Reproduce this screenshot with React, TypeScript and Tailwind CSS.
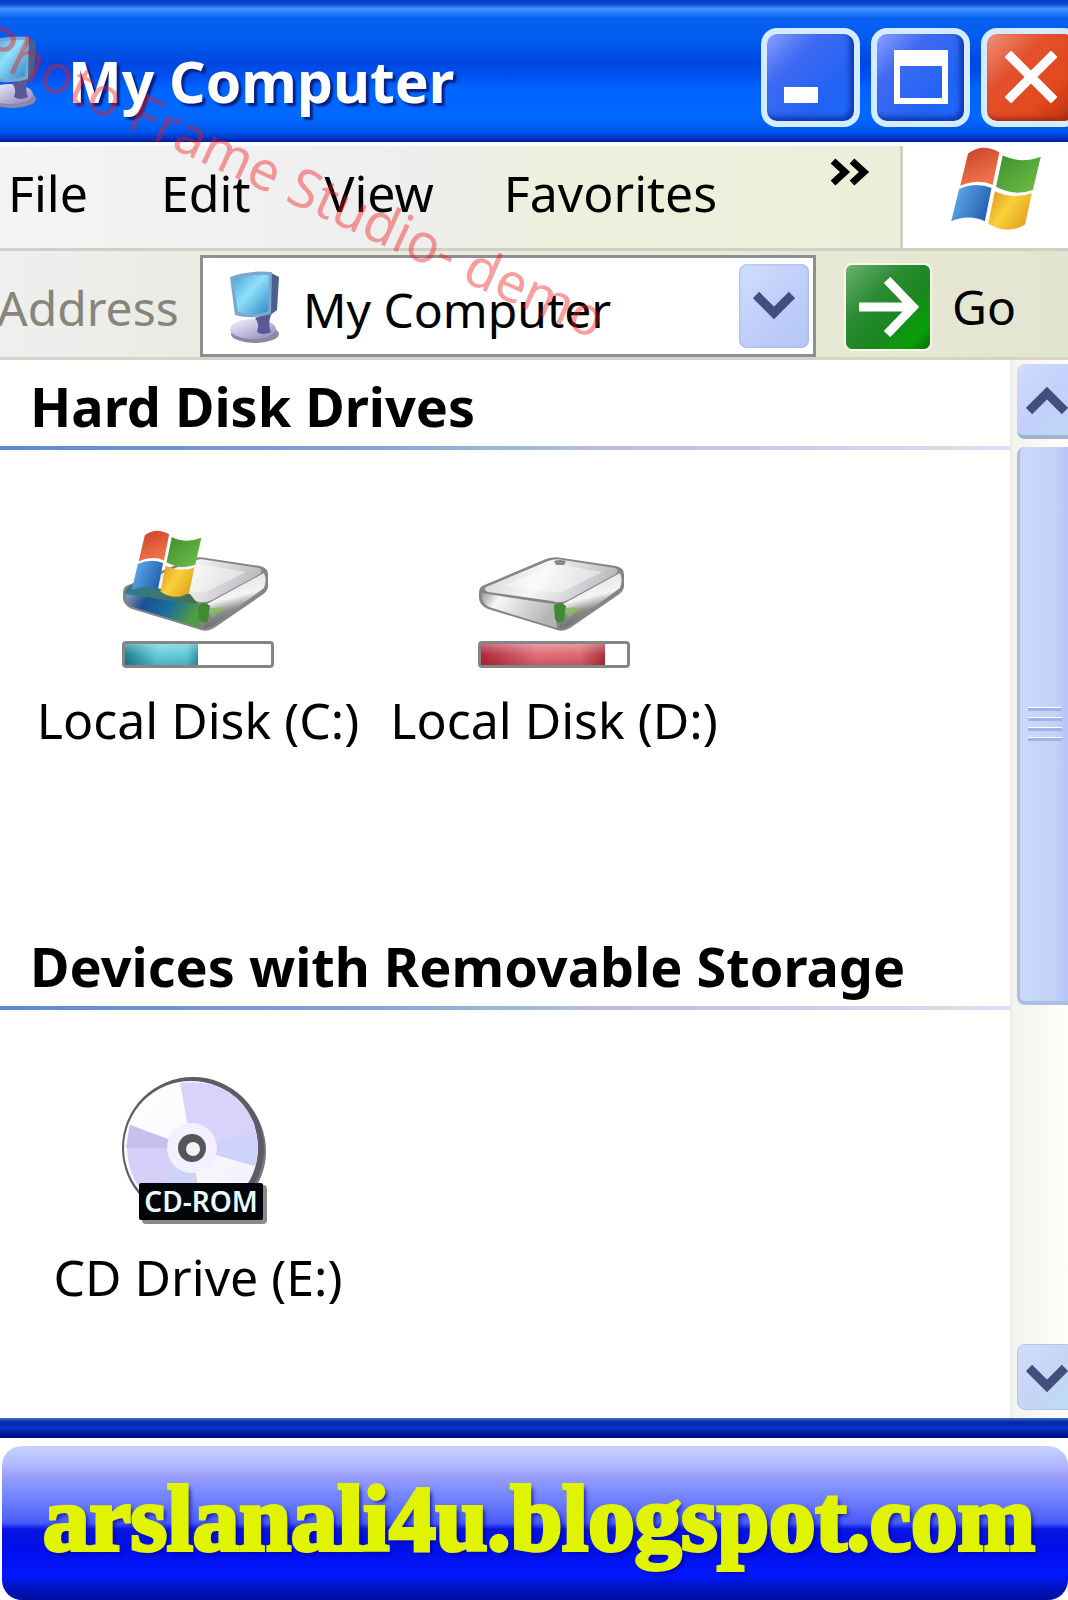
import React from "react";

function ComputerIcon({ className }: { className: string }) {
  return (
    <svg viewBox="0 0 56 76" className={className} aria-hidden="true">
      <defs>
        <linearGradient id="screen" x1="0" y1="0" x2="1" y2="1">
          <stop offset="0" stopColor="#4f9fd6" />
          <stop offset="0.45" stopColor="#8fe0fb" />
          <stop offset="1" stopColor="#2f86c8" />
        </linearGradient>
        <linearGradient id="base" x1="0" y1="0" x2="1" y2="1">
          <stop offset="0" stopColor="#f6f3ff" />
          <stop offset="1" stopColor="#8d86b8" />
        </linearGradient>
      </defs>
      <ellipse cx="28" cy="66" rx="24" ry="9" fill="#8b89a8" />
      <ellipse cx="26" cy="61" rx="23" ry="10" fill="url(#base)" />
      <path d="M28 50 L45 44 Q40 56 44 64 Q36 68 30 64 Q33 56 28 50 Z" fill="#5c5796" />
      <path d="M44 5 L52 9 L50 42 L34 54 L42 46 Z" fill="#4a5f8c" />
      <path d="M3 9 Q22 2 45 4 L44 46 Q26 52 8 47 Z" fill="#7aa6cf" />
      <path d="M6 12 Q22 6 42 7 L41 43 Q26 49 11 44 Z" fill="url(#screen)" />
    </svg>
  );
}

function FlagShapes() {
  return (
    <>
      <path d="M17 6 Q30 -4 45 5 L39 35 Q26 29 10 36 Z" fill="url(#flagRed)" />
      <path d="M48 8 Q64 16 82 9 L75 40 Q58 46 42 37 Z" fill="url(#flagGreen)" />
      <path d="M9 39 Q24 32 38 38 L32 69 Q18 62 2 69 Z" fill="url(#flagBlue)" />
      <path d="M41 41 Q57 49 74 43 L68 72 Q52 82 35 71 Z" fill="url(#flagYellow)" />
    </>
  );
}

function FlagGradients() {
  return (
    <defs>
      <linearGradient id="flagRed" x1="0" y1="0" x2="0.4" y2="1">
        <stop offset="0" stopColor="#c9402c" />
        <stop offset="1" stopColor="#f0754a" />
      </linearGradient>
      <linearGradient id="flagGreen" x1="0" y1="0" x2="1" y2="1">
        <stop offset="0" stopColor="#3f8f2c" />
        <stop offset="1" stopColor="#6fc04a" />
      </linearGradient>
      <linearGradient id="flagBlue" x1="0" y1="0" x2="1" y2="0.4">
        <stop offset="0" stopColor="#67b4f2" />
        <stop offset="1" stopColor="#2763b4" />
      </linearGradient>
      <linearGradient id="flagYellow" x1="0" y1="0" x2="1" y2="0.6">
        <stop offset="0" stopColor="#d99224" />
        <stop offset="0.5" stopColor="#fbd038" />
        <stop offset="1" stopColor="#e2a51e" />
      </linearGradient>
    </defs>
  );
}

function WindowsFlag({ className }: { className: string }) {
  return (
    <svg viewBox="0 0 84 78" preserveAspectRatio="none" className={className} aria-hidden="true">
      <FlagGradients />
      <FlagShapes />
    </svg>
  );
}

function DriveIcon({ system }: { system?: boolean }) {
  return (
    <svg viewBox="0 0 152 104" className="h-[104px] w-[152px]" aria-hidden="true">
      <defs>
        <linearGradient id="driveTop" x1="0" y1="0.4" x2="1" y2="0.6">
          <stop offset="0" stopColor="#d8d8d8" />
          <stop offset="0.4" stopColor="#f6f6f6" />
          <stop offset="1" stopColor="#b4b2b8" />
        </linearGradient>
        <linearGradient id="driveFront" x1="0" y1="0" x2="1" y2="0.3">
          <stop offset="0" stopColor="#9a9a9a" />
          <stop offset="0.25" stopColor="#f7f7f7" />
          <stop offset="1" stopColor="#b5b5b5" />
        </linearGradient>
        <linearGradient id="driveSide" x1="0.3" y1="0" x2="0.6" y2="1">
          <stop offset="0" stopColor="#dedede" />
          <stop offset="0.45" stopColor="#f4f4f4" />
          <stop offset="0.65" stopColor="#8b8b8b" />
          <stop offset="1" stopColor="#5f5f5f" />
        </linearGradient>
        <linearGradient id="driveBlue" x1="0" y1="0" x2="1" y2="0.3">
          <stop offset="0" stopColor="#8ea0bc" />
          <stop offset="0.3" stopColor="#1c4f94" />
          <stop offset="0.65" stopColor="#1b6f9c" />
          <stop offset="1" stopColor="#4f9a44" />
        </linearGradient>
        <linearGradient id="flagShade" x1="0" y1="0" x2="1" y2="0">
          <stop offset="0" stopColor="#2c7d92" />
          <stop offset="1" stopColor="#4c6f4a" />
        </linearGradient>
      </defs>
      <path d="M4 56 L68 29 Q76 26 84 28 L138 36 Q146 38 146 44 L146 56 Q146 61 140 65 L92 98 Q84 103 76 99 L10 79 Q1 75 1 68 L1 63 Q1 58 4 56 Z" fill="#858585" />
      <path d="M8 57 L70 31 Q78 28 85 30 L137 38 Q142 40 138 44 L90 70 Q82 74 74 71 L10 62 Q5 60 8 57 Z" fill="url(#driveTop)" />
      <path d="M26 56 L76 34 L124 42 L82 63 Z" fill="#ffffff" opacity="0.45" />
      <path d="M4 63 Q40 69 76 74 L79 98 Q40 86 11 77 Q3 73 4 63 Z" fill={system ? "url(#driveBlue)" : "url(#driveFront)"} />
      <path d="M85 74 L142 43 Q145 50 142 58 L92 95 Q86 99 81 98 Z" fill="url(#driveSide)" />
      <path d="M76 76 Q82 70 88 76 L86 91 Q80 95 77 89 Z" fill="#3f8a32" />
      <path d="M88 78 L104 77 L90 88 Z" fill="#86bd5f" opacity="0.8" />
      {!system && <path d="M76 31 Q82 29 88 31 L86 35 L78 35 Z" fill="#888" />}
      {system && (
        <>
          <FlagGradients />
          <path d="M3 64 Q4 56 12 54 L68 64 L76 74 Q40 70 3 64 Z" fill="url(#flagShade)" />
          <g transform="translate(8 0) scale(0.87)">
            <FlagShapes />
          </g>
        </>
      )}
    </svg>
  );
}

function CdIcon() {
  return (
    <svg viewBox="0 0 152 150" className="h-[150px] w-[152px]" aria-hidden="true">
      <defs>
        <linearGradient id="disc" x1="0" y1="0" x2="1" y2="1">
          <stop offset="0" stopColor="#ffffff" />
          <stop offset="1" stopColor="#f2f0fb" />
        </linearGradient>
      </defs>
      <circle cx="74" cy="76" r="70" fill="#77767c" />
      <circle cx="71" cy="73" r="71" fill="#5d5c66" />
      <circle cx="69" cy="73" r="67" fill="url(#disc)" />
      <path d="M70 73 L58 8 Q112 2 132 48 Q138 70 133 91 Z" fill="#d9d3fb" />
      <path d="M70 73 L134 57 Q138 74 133 91 Z" fill="#cdd2fb" />
      <path d="M70 73 L8 50 Q0 80 14 108 L30 124 Z" fill="#d5cffa" />
      <path d="M70 73 L8 50 L4 73 Z" fill="#c6bff0" />
      <path d="M70 73 L28 124 L80 138 Z" fill="#cdd2f8" />
      <circle cx="70" cy="73" r="25" fill="#f4f0ff" />
      <circle cx="70" cy="73" r="14" fill="#56555c" />
      <circle cx="71" cy="74" r="7" fill="#f3f3f3" />
      <rect x="20" y="110" width="125" height="39" rx="4" fill="#8a8a8a" />
      <rect x="17" y="108" width="124" height="37" rx="2" fill="#020409" />
      <text x="79" y="137" textAnchor="middle" fill="#eafcff" fontSize="28" fontWeight="600" fontFamily="'Noto Sans', sans-serif">
        CD-ROM
      </text>
    </svg>
  );
}

function Chevron({ up, className }: { up?: boolean; className: string }) {
  return (
    <svg viewBox="0 0 42 30" className={className} fill="none" stroke="#414f80" strokeWidth="9" aria-hidden="true">
      <path d={up ? "M3 26 L21 8 L39 26" : "M3 4 L21 22 L39 4"} />
    </svg>
  );
}

function WindowButton({ label, danger, children }: { label: string; danger?: boolean; children: React.ReactNode }) {
  return (
    <button
      aria-label={label}
      className={
        "flex h-[99px] w-[99px] shrink-0 items-center justify-center rounded-2xl border-[6px] border-[#d3ecff] " +
        (danger
          ? "bg-[linear-gradient(135deg,#f09078_0%,#e3512c_35%,#e2481c_70%,#b83010_100%)] shadow-[inset_-3px_-3px_5px_#a02c14]"
          : "bg-[linear-gradient(135deg,#8ba0ff_0%,#3f6af2_30%,#2163f4_70%,#1d6cff_100%)] shadow-[inset_-4px_-4px_5px_#1238b0]")
      }
    >
      {children}
    </button>
  );
}

function DriveItem({ label, children }: { label: string; children: React.ReactNode }) {
  return (
    <li className="flex w-[356px] flex-col items-center">
      {children}
      <span className="mt-[18px] whitespace-nowrap text-[50px] leading-[68px]">{label}</span>
    </li>
  );
}

function UsageBar({ value, fill }: { value: number; fill: string }) {
  return (
    <div
      role="progressbar"
      aria-label="Used space"
      aria-valuenow={value}
      aria-valuemin={0}
      aria-valuemax={100}
      className="mt-[7px] h-[27px] w-[152px] rounded border-[3px] border-[#858585] bg-white"
    >
      <div className={"h-full " + fill} style={{ width: `${value}%` }} />
    </div>
  );
}

function SectionHeading({ children }: { children: React.ReactNode }) {
  return (
    <div>
      <h2 className="whitespace-nowrap pb-1 pl-[30px] text-[54px] font-bold leading-[72px]">{children}</h2>
      <div className="h-1 bg-[linear-gradient(90deg,#5e8ac4_0%,#7ea4d4_35%,#b6bfe0_60%,#e0def2_100%)]" />
    </div>
  );
}

function Watermark() {
  return (
    <svg viewBox="0 0 660 370" className="pointer-events-none absolute left-0 top-0 h-[370px] w-[660px]" aria-label="Photo Frame Studio- demo">
      <path id="watermarkLine" d="M-24 57 C 160 143 380 247 660 368" fill="none" />
      <text fill="#f01818" fillOpacity="0.42" fontSize="54" fontFamily="'Noto Sans', sans-serif">
        <textPath href="#watermarkLine">Photo Frame Studio- demo</textPath>
      </text>
    </svg>
  );
}

export default function App() {
  return (
    <div className="relative flex min-h-screen flex-col overflow-hidden bg-white font-['Noto_Sans',sans-serif] text-black">
      <header className="flex h-[142px] items-center overflow-hidden bg-[linear-gradient(180deg,#0a3cc0_0%,#0c4cd4_3%,#3c94ff_6%,#2f88ff_8%,#0860f0_13%,#005cf0_28%,#0048e0_44%,#0050f0_54%,#0064ff_62%,#0068ff_84%,#0054ec_93%,#0030bc_98%,#001c90_100%)]">
        <ComputerIcon className="-ml-4 h-[78px] w-14 shrink-0" />
        <h1 className="flex-1 whitespace-nowrap pl-7 pt-5 text-[57px] font-bold leading-[76px] text-white [text-shadow:3px_3px_2px_#0a2080]">My Computer</h1>
        <div className="-mr-3 flex shrink-0 gap-[11px] pb-1 pt-4">
          <WindowButton label="Minimize">
            <span className="mr-5 mt-9 h-4 w-[34px] bg-white" />
          </WindowButton>
          <WindowButton label="Maximize">
            <span className="h-[54px] w-[54px] border-[6px] border-t-[16px] border-white" />
          </WindowButton>
          <WindowButton label="Close" danger>
            <svg viewBox="0 0 56 56" className="h-[52px] w-[52px]" stroke="#fff" strokeWidth="10" aria-hidden="true">
              <path d="M3 3 L53 53 M53 3 L3 53" />
            </svg>
          </WindowButton>
        </div>
      </header>

      <div className="flex h-[106px] border-t-4 border-[#fdfdfb] bg-[linear-gradient(90deg,#f4f4f4_0%,#eeeeee_40%,#eeefdc_52%,#edeed9_100%)]">
        <nav className="flex flex-1 items-center pb-2 text-[50px] leading-[68px]">
          <button className="ml-2">File</button>
          <button className="ml-[73px]">Edit</button>
          <button className="ml-[74px]">View</button>
          <button className="ml-[70px]">Favorites</button>
          <button aria-label="More menus" className="ml-auto mr-7 self-start pt-3">
            <svg viewBox="0 0 42 28" className="h-7 w-[42px]" fill="none" stroke="#000" strokeWidth="7" aria-hidden="true">
              <path d="M3 3 L15 14 L3 25 M22 3 L34 14 L22 25" />
            </svg>
          </button>
        </nav>
        <div className="flex w-[168px] items-center justify-center border-l-[3px] border-[#d2d2c4] bg-white pb-4 pl-5">
          <WindowsFlag className="h-[84px] w-[94px]" />
        </div>
      </div>

      <div className="flex h-[112px] items-end border-y-[3px] border-b-[#d6d4c8] border-t-[#cfcfc8] bg-[linear-gradient(90deg,#efefef_0%,#ebebe4_18%,#e9ead6_70%,#e4e5d0_100%)]">
        <label htmlFor="address" className="-ml-[3px] w-[203px] shrink-0 pb-4 text-[48px] leading-[66px] text-[#85857a]">
          Address
        </label>
        <div className="flex h-[102px] flex-1 items-center border-[3px] border-[#8c9093] bg-white pl-6 pr-1">
          <ComputerIcon className="h-[78px] w-14 shrink-0" />
          <select id="address" className="min-w-0 flex-1 appearance-none bg-transparent pl-5 pt-2 text-[48px] leading-[66px] outline-none">
            <option>My Computer</option>
          </select>
          <span className="flex h-[84px] w-[70px] shrink-0 items-center justify-center rounded-lg bg-[linear-gradient(135deg,#d0defc_0%,#c0cffa_50%,#b4c6f4_100%)] shadow-[inset_0_0_3px_#8fa4d8]">
            <Chevron className="h-[30px] w-[42px]" />
          </span>
        </div>
        <button className="flex w-[252px] shrink-0 items-center gap-[20px] pb-1.5 pl-7 text-[48px] leading-[66px]">
          <span className="flex h-[88px] w-[88px] items-center justify-center rounded-lg border-2 border-[#f6fae8] bg-[linear-gradient(135deg,#6db070_0%,#2c8c34_35%,#1c8620_60%,#08a008_85%,#06700c_100%)]">
            <svg viewBox="0 0 62 60" className="h-[60px] w-[62px]" fill="none" stroke="#fff" strokeWidth="9" aria-hidden="true">
              <path d="M2 30 L54 30 M30 3 L56 30 L30 57" />
            </svg>
          </span>
          Go
        </button>
      </div>

      <div className="flex flex-1">
        <main className="min-w-0 flex-1 pt-[10px]">
          <SectionHeading>Hard Disk Drives</SectionHeading>
          <ul className="flex h-[480px] pl-5 pt-20">
            <DriveItem label="Local Disk (C:)">
              <DriveIcon system />
              <UsageBar value={50} fill="bg-[linear-gradient(180deg,#ffffff50,#ffffff00_50%,#00304030),linear-gradient(90deg,#1f8196,#67cfdb_45%,#5fc9d6_85%,#2f95a8)]" />
            </DriveItem>
            <DriveItem label="Local Disk (D:)">
              <DriveIcon />
              <UsageBar value={85} fill="bg-[linear-gradient(180deg,#ffffff50,#ffffff00_50%,#50000030),linear-gradient(90deg,#b02a3c,#e0707a_45%,#dc6a72_80%,#b0303c)]" />
            </DriveItem>
          </ul>
          <SectionHeading>Devices with Removable Storage</SectionHeading>
          <ul className="flex pl-5 pt-[65px]">
            <DriveItem label="CD Drive (E:)">
              <CdIcon />
            </DriveItem>
          </ul>
        </main>

        <aside aria-label="Scroll" className="flex w-[58px] shrink-0 flex-col overflow-hidden border-l-[3px] border-[#eeeeec] bg-[linear-gradient(90deg,#f4f4ee,#fdfdfb)]">
          <button aria-label="Scroll up" className="ml-1 mt-1 flex h-[75px] w-[60px] items-center justify-center rounded-lg border-b-4 border-[#9fb4cc] bg-[linear-gradient(135deg,#cfdcfc,#c3d0fa_50%,#bcd8f8)]">
            <Chevron up className="h-[30px] w-[42px]" />
          </button>
          <div className="ml-1 mt-2 flex h-[558px] w-[66px] items-center rounded-lg border-b-4 border-l-[3px] border-[#a9bfe4] bg-[linear-gradient(90deg,#cbd8fb_0%,#c3d2f6_55%,#b8c4fc_75%,#b4c0fc_100%)] pl-2">
            <div className="flex w-[34px] flex-col gap-[6px]">
              <span className="h-1 border-t border-white bg-[#9cb4e8]" />
              <span className="h-1 border-t border-white bg-[#9cb4e8]" />
              <span className="h-1 border-t border-white bg-[#9cb4e8]" />
              <span className="h-1 border-t border-white bg-[#9cb4e8]" />
            </div>
          </div>
          <button aria-label="Scroll down" className="mb-2 ml-1 mt-auto flex h-[66px] w-[60px] items-center justify-center rounded-lg border border-[#b4c4ec] bg-[linear-gradient(135deg,#d2ddfb,#c5d5f6_50%,#bcdcf4)] pt-1">
            <Chevron className="h-[30px] w-[42px]" />
          </button>
        </aside>
      </div>

      <div className="h-5 bg-[linear-gradient(180deg,#3a6ed0_0%,#0428a8_20%,#0c34c4_50%,#001c9c_75%,#000c7c_100%)]" />

      <footer className="ml-[2px] mt-2 flex h-[154px] items-center justify-center overflow-hidden rounded-[20px] bg-[linear-gradient(180deg,#c8d2ff_0%,#b0baff_12%,#9a9cfa_20%,#7f90ff_28%,#6878fa_38%,#4a5cfa_50%,#0814e0_54%,#0010e8_66%,#0018ff_84%,#0014c8_91%,#0010a0_100%)] pb-2">
        <a
          href="#blog"
          className="whitespace-nowrap pl-2 font-['Liberation_Serif',serif] text-[93px] font-bold leading-[104px] text-[#e0f400] [-webkit-text-stroke:4px_#e0f400] [text-shadow:3px_3px_5px_#0000a0]"
        >
          arslanali4u.blogspot.com
        </a>
      </footer>

      <Watermark />
    </div>
  );
}
